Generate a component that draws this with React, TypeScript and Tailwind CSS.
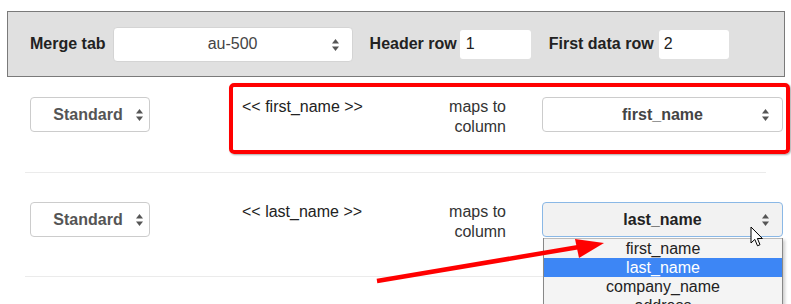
import React from "react";

const Arrows = () => (
  <svg width="9" height="14" viewBox="0 0 9 14" className="shrink-0">
    <path d="M4.5 1 L8 5.5 L1 5.5 Z" fill="#555" />
    <path d="M4.5 13 L8 8.5 L1 8.5 Z" fill="#555" />
  </svg>
);

const Select = ({
  value,
  className,
  textClass,
  arrowPos = "right-[12px]",
}: {
  value: string;
  className: string;
  textClass: string;
  arrowPos?: string;
}) => (
  <div className={`relative flex items-center justify-center rounded-[4px] border h-[35px] ${className}`}>
    <span className={`text-[16px] ${textClass}`}>{value}</span>
    <div className={`absolute top-[10px] ${arrowPos}`}>
      <Arrows />
    </div>
  </div>
);

const MapRow = ({
  field,
  column,
  focused,
  pt,
  pb,
}: {
  field: string;
  column: string;
  focused?: boolean;
  pt: string;
  pb: string;
}) => (
  <div className={`flex items-start h-[35px] box-content pl-[30px] ${pt} ${pb}`}>
    <Select
      value="Standard"
      className="w-[120px] border-[#ccc] bg-white pr-[4px]"
      textClass="font-bold text-[#555]"
      arrowPos="right-[5px]"
    />
    <div className="ml-[92px] w-[150px] h-[35px] text-[16px] leading-[20px] text-[#222]">
      {"<< " + field + " >>"}
    </div>
    <div className="w-[114px] h-[35px] text-right text-[16px] leading-[20px] text-[#333]">
      maps to
      <br />
      column
    </div>
    <Select
      value={column}
      className={
        focused
          ? "ml-[36px] w-[241px] border-[#8ab8e6] bg-[#f2f2f2]"
          : "ml-[36px] w-[241px] border-[#ccc] bg-white"
      }
      textClass={focused ? "font-bold text-[#222]" : "font-bold text-[#444]"}
    />
  </div>
);

export default function App() {
  return (
    <div
      className="relative w-[791px] h-[304px] overflow-hidden bg-white"
      style={{ fontFamily: '"Liberation Sans", Arial, sans-serif' }}
    >
      <div className="pt-[11px] pl-[7px]">
        <div className="flex items-center w-[778px] h-[66px] border border-[#7a7a7a] bg-[#e0e0e0] pl-[22px]">
          <span className="text-[16px] font-bold text-[#222]">Merge tab</span>
          <Select
            value="au-500"
            className="ml-[7px] w-[240px] border-[#d4d4d4] bg-white"
            textClass="text-[#444]"
          />
          <span className="ml-[17px] text-[16px] font-bold text-[#222]">Header row</span>
          <div className="ml-[3px] w-[71px] h-[29px] rounded-[3px] bg-white px-[6px] flex items-center text-[16px] text-[#222]">
            1
          </div>
          <span className="ml-[18px] text-[16px] font-bold text-[#222]">First data row</span>
          <div className="ml-[5px] w-[70px] h-[29px] rounded-[3px] bg-white px-[5px] flex items-center text-[16px] text-[#222]">
            2
          </div>
        </div>
      </div>

      <MapRow field="first_name" column="first_name" pt="pt-[20px]" pb="pb-[40px]" />
      <div className="ml-[25px] w-[741px] h-px bg-[#ebebeb]" />
      <MapRow field="last_name" column="last_name" focused pt="pt-[29px]" pb="pb-[39px]" />
      <div className="ml-[25px] w-[741px] h-px bg-[#ebebeb]" />

      {/* annotation box */}
      <div className="absolute left-[229px] top-[83px] w-[561px] h-[71px] rounded-[5px] border-4 border-[#ff0000] shadow-[1px_1px_2px_rgba(0,0,0,0.35)]" />

      {/* open dropdown */}
      <div className="absolute left-[543px] top-[238px] w-[240px] border-x border-[#888] bg-[#f4f4f4] text-[16px] text-[#222] text-center shadow-[2px_2px_3px_rgba(0,0,0,0.2)]">
        <div className="h-px bg-[#bbb]" />
        <div className="h-[19px] leading-[19px]">first_name</div>
        <div className="h-[19px] leading-[19px] bg-[#3d86f5] text-white">last_name</div>
        <div className="h-[19px] leading-[19px]">company_name</div>
        <div className="h-[19px] leading-[19px]">address</div>
      </div>

      {/* red arrow */}
      <svg className="absolute left-0 top-0" width="791" height="304">
        <line x1="377" y1="281" x2="582" y2="246.5" stroke="#ff0000" strokeWidth="4.5" />
        <path d="M604 243 L575 239 L579 258 Z" fill="#ff0000" />
      </svg>

      {/* mouse cursor */}
      <svg className="absolute left-[750px] top-[226px]" width="14" height="22" viewBox="0 0 14 22">
        <path
          d="M1 1 L1 17 L4.8 13.4 L7.5 19.8 L10 18.7 L7.4 12.5 L12.4 12.5 Z"
          fill="#fff"
          stroke="#000"
          strokeWidth="1"
          strokeLinejoin="round"
        />
      </svg>
    </div>
  );
}
